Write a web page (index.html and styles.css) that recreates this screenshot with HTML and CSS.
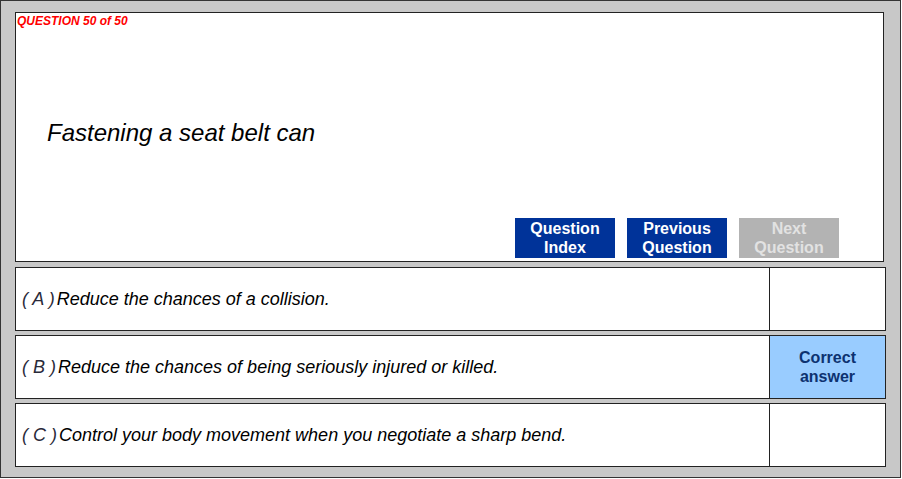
FILE: index.html
```html
<!DOCTYPE html>
<html lang="en">
<head>
  <meta charset="utf-8">
  <title>Question 50 of 50</title>
  <link rel="stylesheet" href="styles.css">
</head>
<body>
  <div class="frame">
    <!-- question panel -->
    <div class="panel">
      <div class="qnum">QUESTION 50 of 50</div>
      <div class="qtext">Fastening a seat belt can</div>
      <div class="nav">
        <button class="btn">Question<br>Index</button>
        <button class="btn">Previous<br>Question</button>
        <button class="btn off">Next<br>Question</button>
      </div>
    </div>

    <!-- answers -->
    <div class="option">
      <div class="otext"><span class="letter">( A )</span> Reduce the chances of a collision.</div>
      <div class="mark"></div>
    </div>
    <div class="option">
      <div class="otext"><span class="letter">( B )</span> Reduce the chances of being seriously injured or killed.</div>
      <div class="mark correct">Correct<br>answer</div>
    </div>
    <div class="option">
      <div class="otext"><span class="letter">( C )</span> Control your body movement when you negotiate a sharp bend.</div>
      <div class="mark"></div>
    </div>
  </div>
</body>
</html>
```

FILE: styles.css
```css
* { margin: 0; padding: 0; box-sizing: border-box; }
body {
  font-family: "Liberation Sans", Arial, sans-serif;
  background: #fff;
}
.frame {
  width: 901px;
  height: 478px;
  border: 1px solid #333;
  background: #c8c8c8;
  padding: 11px 0 10px 14px;
  display: flex;
  flex-direction: column;
  gap: 4px;
}
.panel {
  width: 869px;
  height: 250px;
  margin-bottom: 1px;
  background: #fff;
  border: 1px solid #222;
  display: flex;
  flex-direction: column;
}
.qnum {
  color: #ff0000;
  font-size: 12px;
  font-weight: bold;
  font-style: italic;
  padding: 1px 0 0 1px;
  line-height: 14px;
}
.qtext {
  flex: 1;
  display: flex;
  align-items: center;
  padding: 20px 0 0 31px;
  font-size: 24px;
  font-style: italic;
  color: #000;
}
.nav {
  display: flex;
  justify-content: flex-end;
  gap: 12px;
  padding: 0 44px 3px 0;
}
.btn {
  width: 100px;
  height: 40px;
  border: none;
  background: #003399;
  color: #fff;
  font-family: inherit;
  font-size: 16px;
  font-weight: bold;
  line-height: 19px;
}
.btn.off {
  background: #b3b3b3;
  color: #e2e2e2;
}
.option {
  width: 871px;
  height: 64px;
  background: #fff;
  border: 1px solid #222;
  display: grid;
  grid-template-columns: 1fr 116px;
}
.otext {
  display: flex;
  align-items: center;
  padding-left: 6px;
  font-size: 18px;
  font-style: italic;
  color: #000;
}
.letter {
  color: #2a2a3a;
  margin-right: 2px;
}
.mark {
  border-left: 1px solid #222;
}
.mark.correct {
  background: #99ccff;
  color: #0d3270;
  font-size: 16px;
  font-weight: bold;
  line-height: 19px;
  text-align: center;
  display: flex;
  align-items: center;
  justify-content: center;
}
```
